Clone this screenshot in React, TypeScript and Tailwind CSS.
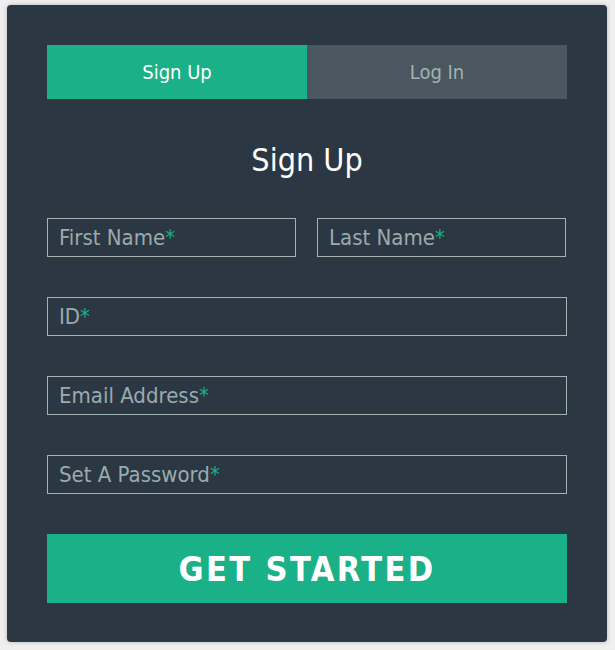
import { useState } from 'react'

const font = { fontFamily: '"DejaVu Sans Condensed", "DejaVu Sans", Tahoma, sans-serif' }

function Field({ label, className = '' }: { label: string; className?: string }) {
  return (
    <div
      className={`relative h-[39px] border border-[#a0b3b0] flex items-center pl-[11px] text-[22px] text-[#9aabad] ${className}`}
    >
      <span>
        {label}
        <span className="text-[#1ab188]">*</span>
      </span>
    </div>
  )
}

export default function App() {
  const [tab, setTab] = useState<'signup' | 'login'>('signup')

  return (
    <div className="min-h-[650px] w-[615px] bg-[#efefef] pt-[5px] pl-[7px]" style={font}>
      <div className="w-[600px] h-[637px] bg-[#2b3743] rounded-[4px] shadow-[0_0_4px_rgba(0,0,0,0.25)] px-[40px] pt-[40px] pb-[39px] flex flex-col">
        <div className="flex h-[54px]">
          <button
            onClick={() => setTab('signup')}
            className={`flex-1 text-[20px] ${tab === 'signup' ? 'bg-[#1ab188] text-white' : 'bg-[#4a5760] text-[#a0b3b0]'}`}
          >
            Sign Up
          </button>
          <button
            onClick={() => setTab('login')}
            className={`flex-1 text-[20px] ${tab === 'login' ? 'bg-[#1ab188] text-white' : 'bg-[#4a5760] text-[#a0b3b0]'}`}
          >
            Log In
          </button>
        </div>

        <h1 className="mt-[41px] mb-[38px] h-[40px] leading-[40px] text-center text-[32px] text-white">
          Sign Up
        </h1>

        <div className="flex gap-[21px] pr-[1px]">
          <Field label="First Name" className="flex-1" />
          <Field label="Last Name" className="flex-1" />
        </div>
        <Field label="ID" className="mt-[40px]" />
        <Field label="Email Address" className="mt-[40px]" />
        <Field label="Set A Password" className="mt-[40px]" />

        <button className="mt-[40px] h-[69px] bg-[#1ab188] text-white text-[34px] font-bold tracking-[2.4px] pt-[2px]">
          GET STARTED
        </button>
      </div>
    </div>
  )
}
